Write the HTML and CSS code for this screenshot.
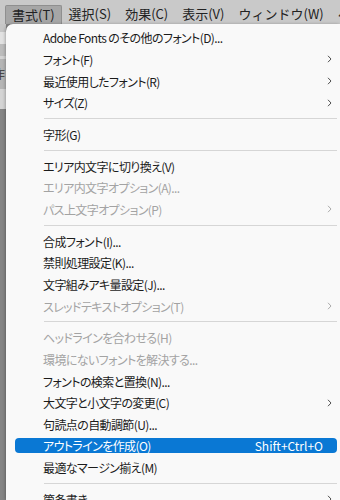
FILE: index.html
```html
<!DOCTYPE html>
<html lang="ja">
<head>
  <meta charset="UTF-8">
  <title>書式メニュー</title>
  <link rel="stylesheet" href="styles.css">
</head>
<body>
<div class="menubar">
  <span class="bar-item active">書式(T)</span>
  <span class="bar-item">選択(S)</span>
  <span class="bar-item">効果(C)</span>
  <span class="bar-item">表示(V)</span>
  <span class="bar-item">ウィンドウ(W)</span>
  <span class="bar-item">ヘルプ(H)</span>
</div>

<div class="workspace">
  <div class="side">
    <div class="band b1"></div>
    <div class="band b2"></div>
    <div class="band b3"></div>
    <div class="band b4"></div>
    <div class="band b5">作</div>
    <div class="band b6"></div>
    <div class="band b7"></div>
  </div>

  <div class="menu">
    <div class="item">Adobe Fonts のその他のフォント(D)...</div>
    <div class="item sub">フォント(F)</div>
    <div class="item sub">最近使用したフォント(R)</div>
    <div class="item sub">サイズ(Z)</div>
    <div class="sep"></div>
    <div class="item">字形(G)</div>
    <div class="sep"></div>
    <div class="item">エリア内文字に切り換え(V)</div>
    <div class="item off">エリア内文字オプション(A)...</div>
    <div class="item off sub">パス上文字オプション(P)</div>
    <div class="sep"></div>
    <div class="item">合成フォント(I)...</div>
    <div class="item">禁則処理設定(K)...</div>
    <div class="item">文字組みアキ量設定(J)...</div>
    <div class="item off sub">スレッドテキストオプション(T)</div>
    <div class="sep"></div>
    <div class="item off">ヘッドラインを合わせる(H)</div>
    <div class="item off">環境にないフォントを解決する...</div>
    <div class="item">フォントの検索と置換(N)...</div>
    <div class="item sub">大文字と小文字の変更(C)</div>
    <div class="item">句読点の自動調節(U)...</div>
    <div class="item active">アウトラインを作成(O)<span class="key">Shift+Ctrl+O</span></div>
    <div class="item">最適なマージン揃え(M)</div>
    <div class="sep"></div>
    <div class="item sub">箇条書き</div>
  </div>
</div>
</body>
</html>
```

FILE: styles.css
```css
* {
  margin: 0;
  padding: 0;
  box-sizing: border-box;
}

body {
  width: 340px;
  height: 500px;
  overflow: hidden;
  background: #858585;
  font-family: 'Noto Sans CJK JP', 'Noto Sans', sans-serif;
  color: #1b1b1b;
}

.menubar {
  height: 24px;
  background: #c9c9c9;
  display: flex;
  align-items: flex-end;
  padding-left: 5px;
  white-space: nowrap;
  overflow: hidden;
}

.bar-item {
  flex: none;
  height: 19px;
  line-height: 18px;
  padding: 0 7px;
  font-size: 13px;
  color: #222;
}

.bar-item.active {
  background: #a6a6a6;
  border: 1px solid #8f8f8f;
  border-bottom: none;
  border-radius: 2px 2px 0 0;
  padding: 0 6px;
}

.workspace {
  display: flex;
  height: 476px;
}

.side {
  width: 6px;
  display: flex;
  flex-direction: column;
  overflow: hidden;
}

.band { flex: none; }
.b1 { height: 8px; background: #c6c6c6; }
.b2 { height: 12px; background: #e2e2e2; }
.b3 { height: 12px; background: #bcbcbc; }
.b4 { height: 3px; background: #d3d3d3; }
.b5 {
  height: 30px;
  background: #b5b5b5;
  font-size: 12px;
  line-height: 30px;
  text-indent: -7px;
  color: #333;
}
.b6 { height: 20px; background: #d4d4d4; }
.b7 { flex: 1; background: #858585; }

.menu {
  flex: 1;
  background: #f9f9f9;
  border-top-left-radius: 7px;
  box-shadow: -1px 0 3px rgba(0, 0, 0, 0.25);
  padding-top: 3px;
  display: flex;
  flex-direction: column;
  font-size: 12px;
  font-feature-settings: "palt";
  letter-spacing: -0.6px;
}

.item {
  flex: none;
  height: 15px;
  margin: 3.33px 3px 3.34px 9px;
  padding: 0 14px 0 28px;
  display: flex;
  align-items: center;
  white-space: nowrap;
  border-radius: 4px;
}

.item.off {
  color: #a3a3a3;
}

.item.sub::after {
  content: '';
  margin-left: auto;
  margin-right: -9px;
  width: 5px;
  height: 8px;
  background: url("data:image/svg+xml,%3Csvg xmlns='http://www.w3.org/2000/svg' width='5' height='8'%3E%3Cpath d='M1 0.8l3 3.2-3 3.2' fill='none' stroke='%23505050' stroke-width='1'/%3E%3C/svg%3E") no-repeat;
}

.item.off.sub::after {
  opacity: 0.45;
}

.item.active {
  background: #0a78d4;
  color: #fff;
}

.key {
  margin-left: auto;
  letter-spacing: 0;
}

.sep {
  flex: none;
  height: 1px;
  margin: 4.5px 3px 4.5px 38px;
  background: #d6d6d6;
}
```
